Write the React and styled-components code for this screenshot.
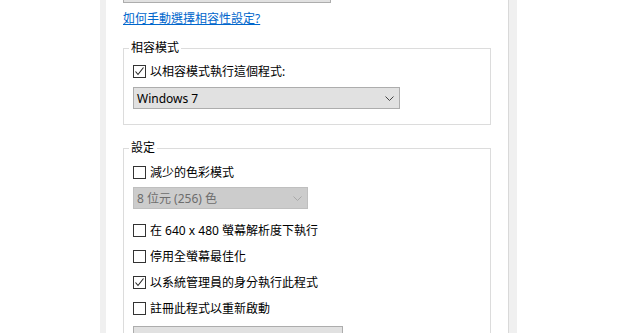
import React from 'react';
import styled, { createGlobalStyle } from 'styled-components';

const GlobalStyle = createGlobalStyle`
  body {
    margin: 0;
    background: #ffffff;
    font-family: "Noto Sans", "Noto Sans CJK TC", sans-serif;
    font-size: 12px;
    color: #000000;
  }
`;

function Chevron({ disabled }) {
  return (
    <svg width="9" height="5" viewBox="0 0 9 5">
      <path d="M0.5 0.5 L4.5 4.5 L8.5 0.5" fill="none" stroke={disabled ? '#a8a8a8' : '#444444'} strokeWidth="1" />
    </svg>
  );
}

function CheckRow({ label, checked }) {
  return (
    <Row>
      <Box>
        {checked && (
          <svg width="11" height="11" viewBox="0 0 11 11">
            <path d="M1.5 5.5 L4 8.5 L9.5 1.5" fill="none" stroke="#222" strokeWidth="1.1" />
          </svg>
        )}
      </Box>
      <span>{label}</span>
    </Row>
  );
}

export default function App() {
  return (
    <Page>
      <GlobalStyle />
      <Frame>
        <TabPage>
          <TopButton />
          <HelpLink>如何手動選擇相容性設定?</HelpLink>

          <Group $pb={15}>
            <Legend>相容模式</Legend>
            <Spacer $h={11} />
            <CheckRow label="以相容模式執行這個程式:" checked />
            <Combo $width={267} $mt={9}>
              <span>Windows 7</span>
              <Chevron />
            </Combo>
          </Group>

          <Group $mt={17}>
            <Legend>設定</Legend>
            <Spacer $h={12} />
            <CheckRow label="減少的色彩模式" />
            <Combo $width={175} $mt={8} $disabled>
              <span>8 位元 (256) 色</span>
              <Chevron disabled />
            </Combo>
            <Spacer $h={15} />
            <CheckRow label="在 640 x 480 螢幕解析度下執行" />
            <Spacer $h={13} />
            <CheckRow label="停用全螢幕最佳化" />
            <Spacer $h={13} />
            <CheckRow label="以系統管理員的身分執行此程式" checked />
            <Spacer $h={13} />
            <CheckRow label="註冊此程式以重新啟動" />
            <BottomButton />
          </Group>
        </TabPage>
      </Frame>
    </Page>
  );
}

const Page = styled.div`
  display: flex;
  width: 618px;
  height: 333px;
  overflow: hidden;
  padding-left: 100px;
  box-sizing: border-box;
`;

const Frame = styled.div`
  display: flex;
  width: 417px;
  background: #f0f0f0;
  padding: 0 8px 0 6px;
  box-sizing: border-box;
`;

const TabPage = styled.div`
  flex: 1;
  display: flex;
  flex-direction: column;
  align-items: flex-start;
  background: #ffffff;
  border-right: 1px solid #d9d9d9;
  padding-left: 17px;

  & > * {
    flex-shrink: 0;
  }
`;

const TopButton = styled.div`
  width: 208px;
  height: 23px;
  margin-top: -20px;
  box-sizing: border-box;
  background: #e1e1e1;
  border: 1px solid #adadad;
`;

const HelpLink = styled.a`
  display: block;
  margin-top: 8px;
  line-height: 16px;
  color: #0066cc;
  text-decoration: underline;
  cursor: pointer;
`;

const Group = styled.fieldset`
  width: 368px;
  box-sizing: border-box;
  margin: ${p => p.$mt || 15}px 0 0 0;
  padding: 0 0 ${p => p.$pb || 40}px 9px;
  border: 1px solid #dcdcdc;
  min-width: 0;
`;

const Legend = styled.legend`
  margin-left: -4px;
  padding: 0 2px;
  line-height: 12px;
  height: 12px;
`;

const Spacer = styled.div`
  height: ${p => p.$h}px;
`;

const Row = styled.div`
  display: flex;
  align-items: center;
  gap: 4px;
  height: 13px;
  line-height: 13px;
  white-space: nowrap;
`;

const Box = styled.div`
  width: 13px;
  height: 13px;
  box-sizing: border-box;
  border: 1px solid #333333;
  background: #ffffff;
  display: flex;
  align-items: center;
  justify-content: center;
  flex-shrink: 0;
`;

const Combo = styled.div`
  display: flex;
  align-items: center;
  justify-content: space-between;
  width: ${p => p.$width}px;
  height: 22px;
  margin-top: ${p => p.$mt}px;
  box-sizing: border-box;
  padding: 0 5px 0 3px;
  background: ${p => (p.$disabled ? '#cccccc' : '#e1e1e1')};
  border: 1px solid ${p => (p.$disabled ? '#bfbfbf' : '#adadad')};
  color: ${p => (p.$disabled ? '#6d6d6d' : '#000000')};
`;

const BottomButton = styled.div`
  width: 210px;
  height: 23px;
  margin-top: 11px;
  box-sizing: border-box;
  background: #e1e1e1;
  border: 1px solid #adadad;
`;
